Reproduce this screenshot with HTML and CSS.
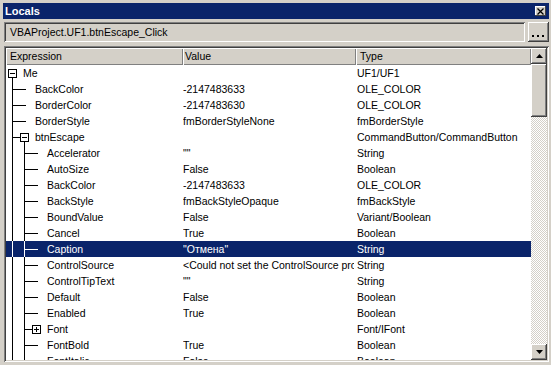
FILE: index.html
```html
<!DOCTYPE html>
<html>
    <head>
        <title>Locals</title>
        <meta charset="utf-8" />
        <link rel="stylesheet" href="styles.css">
    </head>
    <body>
        <div class="window">
            <div class="titlebar">
                <span>Locals</span>
                <span class="close">
                    <svg width="8" height="7" viewBox="0 0 8 7"><path d="M0.5 0.5l6 6M6.5 0.5l-6 6" stroke="#000" stroke-width="1.3" fill="none"/></svg>
                </span>
            </div>

            <div class="combo">
                <div class="comboField">VBAProject.UF1.btnEscape_Click</div>
                <div class="raised dots">
                    <svg width="13" height="2"><rect x="0" y="0" width="2" height="2"/><rect x="5" y="0" width="2" height="2"/><rect x="10" y="0" width="2" height="2"/></svg>
                </div>
            </div>

            <div class="list">
                <div class="listMain">
                    <div class="header">
                        <div class="hcell">Expression</div>
                        <div class="hcell">Value</div>
                        <div class="hcell">Type</div>
                    </div>
                    <div id="rows" class="rows"></div>
                </div>
                <div class="scrollbar">
                    <div class="raised sbtn">
                        <svg width="7" height="4"><path d="M3.5 0L7 4H0z"/></svg>
                    </div>
                    <div class="raised thumb"></div>
                    <div class="track"></div>
                    <div class="raised sbtn">
                        <svg width="7" height="4"><path d="M0 0h7L3.5 4z"/></svg>
                    </div>
                </div>
            </div>
        </div>

        <script>
            // kind: me = root, l1 = child of Me, btn = expanded child, l2 = grandchild, font = collapsed grandchild
            const locals = [
                ['me', 'Me', '', 'UF1/UF1'],
                ['l1', 'BackColor', '-2147483633', 'OLE_COLOR'],
                ['l1', 'BorderColor', '-2147483630', 'OLE_COLOR'],
                ['l1', 'BorderStyle', 'fmBorderStyleNone', 'fmBorderStyle'],
                ['btn', 'btnEscape', '', 'CommandButton/CommandButton'],
                ['l2', 'Accelerator', '""', 'String'],
                ['l2', 'AutoSize', 'False', 'Boolean'],
                ['l2', 'BackColor', '-2147483633', 'OLE_COLOR'],
                ['l2', 'BackStyle', 'fmBackStyleOpaque', 'fmBackStyle'],
                ['l2', 'BoundValue', 'False', 'Variant/Boolean'],
                ['l2', 'Cancel', 'True', 'Boolean'],
                ['l2', 'Caption', '"Отмена"', 'String', true],
                ['l2', 'ControlSource', '<Could not set the ControlSource property. Invalid property value.>', 'String'],
                ['l2', 'ControlTipText', '""', 'String'],
                ['l2', 'Default', 'False', 'Boolean'],
                ['l2', 'Enabled', 'True', 'Boolean'],
                ['font', 'Font', '', 'Font/IFont'],
                ['l2', 'FontBold', 'True', 'Boolean'],
                ['l2', 'FontItalic', 'False', 'Boolean']
            ];

            const rowsEl = document.getElementById('rows');
            for (let i = 0; i < locals.length; i++) {
                var r = locals[i];
                var row = document.createElement('div');
                row.className = r[4] ? 'row sel' : 'row';
                row.innerHTML = '<div class="cell expr">' + treeSvg(r[0]) + '<span></span></div>'
                    + '<div class="cell val"></div><div class="cell"></div>';
                row.children[0].lastChild.textContent = r[1];
                row.children[1].textContent = r[2];
                row.children[2].textContent = r[3];
                rowsEl.appendChild(row);
            }

            function treeSvg(kind) {
                var widths = { me: 17, l1: 29, btn: 29, l2: 41, font: 41 };
                var s = '';
                if (kind == 'me') { s += box(6, false) + line(6, 12, 1, 4); }
                else { s += line(6, 0, 1, 16); }
                if (kind == 'l1') s += line(6, 8, 14, 1);
                if (kind == 'btn') s += line(6, 8, 8, 1) + box(18, false) + line(18, 13, 1, 3);
                if (kind == 'l2' || kind == 'font') s += line(18, 0, 1, 16);
                if (kind == 'l2') s += line(18, 8, 14, 1);
                if (kind == 'font') s += line(18, 8, 8, 1) + box(30, true);
                return '<svg class="tree" width="' + widths[kind] + '" height="16">' + s + '</svg>';
            }

            function line(x, y, w, h) {
                return '<rect x="' + x + '" y="' + y + '" width="' + w + '" height="' + h + '"/>';
            }

            function box(cx, plus) {
                var s = line(cx - 4, 4, 9, 9);
                s += '<rect x="' + (cx - 3) + '" y="5" width="7" height="7" fill="#fff"/>';
                s += line(cx - 2, 8, 5, 1);
                if (plus) s += line(cx, 6, 1, 5);
                return s;
            }
        </script>
    </body>
</html>
```

FILE: styles.css
```css
body {
    margin: 0;
    background: #d4d0c8;
    font-family: "Liberation Sans", Arial, sans-serif;
    font-size: 10.5px;
    color: #000;
}

.window {
    width: 551px;
    height: 365px;
    box-sizing: border-box;
    padding: 3px 2px 3px 3px;
    display: flex;
    flex-direction: column;
}

.titlebar {
    height: 16px;
    flex-shrink: 0;
    background: #0a246a;
    color: #fff;
    font-size: 11px;
    font-weight: bold;
    display: flex;
    align-items: center;
    justify-content: space-between;
    padding: 0 3px 0 2px;
}
.close {
    width: 11px;
    height: 10px;
    background: #d4d0c8;
    box-shadow: inset -1px -1px #404040, inset 1px 1px #fff;
    display: flex;
    align-items: center;
    justify-content: center;
}

.raised {
    background: #d4d0c8;
    box-shadow: inset -1px -1px #404040, inset 1px 1px #fff, inset -2px -2px #808080, inset 2px 2px #d4d0c8;
}

.combo {
    display: flex;
    gap: 3px;
    height: 20px;
    margin: 3px 0 0 1px;
    flex-shrink: 0;
}
.comboField {
    flex: 1;
    padding-left: 6px;
    line-height: 20px;
    box-shadow: inset 1px 1px #808080, inset -1px -1px #fff, inset 2px 2px #404040, inset -2px -2px #d4d0c8;
}
.dots {
    width: 21px;
    display: flex;
    align-items: flex-end;
    justify-content: center;
    padding-bottom: 5px;
    box-sizing: border-box;
}

.list {
    flex: 1;
    margin: 4px 0 0 1px;
    padding: 2px;
    display: grid;
    grid-template-columns: 1fr 16px;
    min-height: 0;
    background: #fff;
    box-shadow: inset 1px 1px #808080, inset -1px -1px #fff, inset 2px 2px #404040, inset -2px -2px #d4d0c8;
}
.listMain {
    display: flex;
    flex-direction: column;
    min-height: 0;
    overflow: hidden;
}

.header {
    display: grid;
    grid-template-columns: 177px 173px 1fr;
    height: 17px;
    flex-shrink: 0;
}
.hcell {
    background: #d4d0c8;
    box-shadow: inset 1px 1px #fff, inset -1px -1px #808080;
    padding-left: 2px;
    line-height: 17px;
}
.hcell:first-child,
.hcell:last-child {
    padding-left: 4px;
}

.rows {
    flex: 1;
    overflow: hidden;
}
.row {
    display: grid;
    grid-template-columns: 177px 174px 1fr;
    height: 16px;
    line-height: 16px;
    white-space: nowrap;
}
.cell {
    overflow: hidden;
}
.val {
    margin-right: 3px;
}
.expr {
    display: flex;
}
.tree {
    flex-shrink: 0;
    fill: currentColor;
}
.sel {
    background: #0a246a;
    color: #fff;
}

.scrollbar {
    display: flex;
    flex-direction: column;
}
.sbtn {
    height: 16px;
    display: flex;
    align-items: center;
    justify-content: center;
}
.thumb {
    height: 53px;
}
.track {
    flex: 1;
    background: repeating-conic-gradient(#fff 0 25%, #d4d0c8 0 50%) 0 0 / 2px 2px;
}
```
